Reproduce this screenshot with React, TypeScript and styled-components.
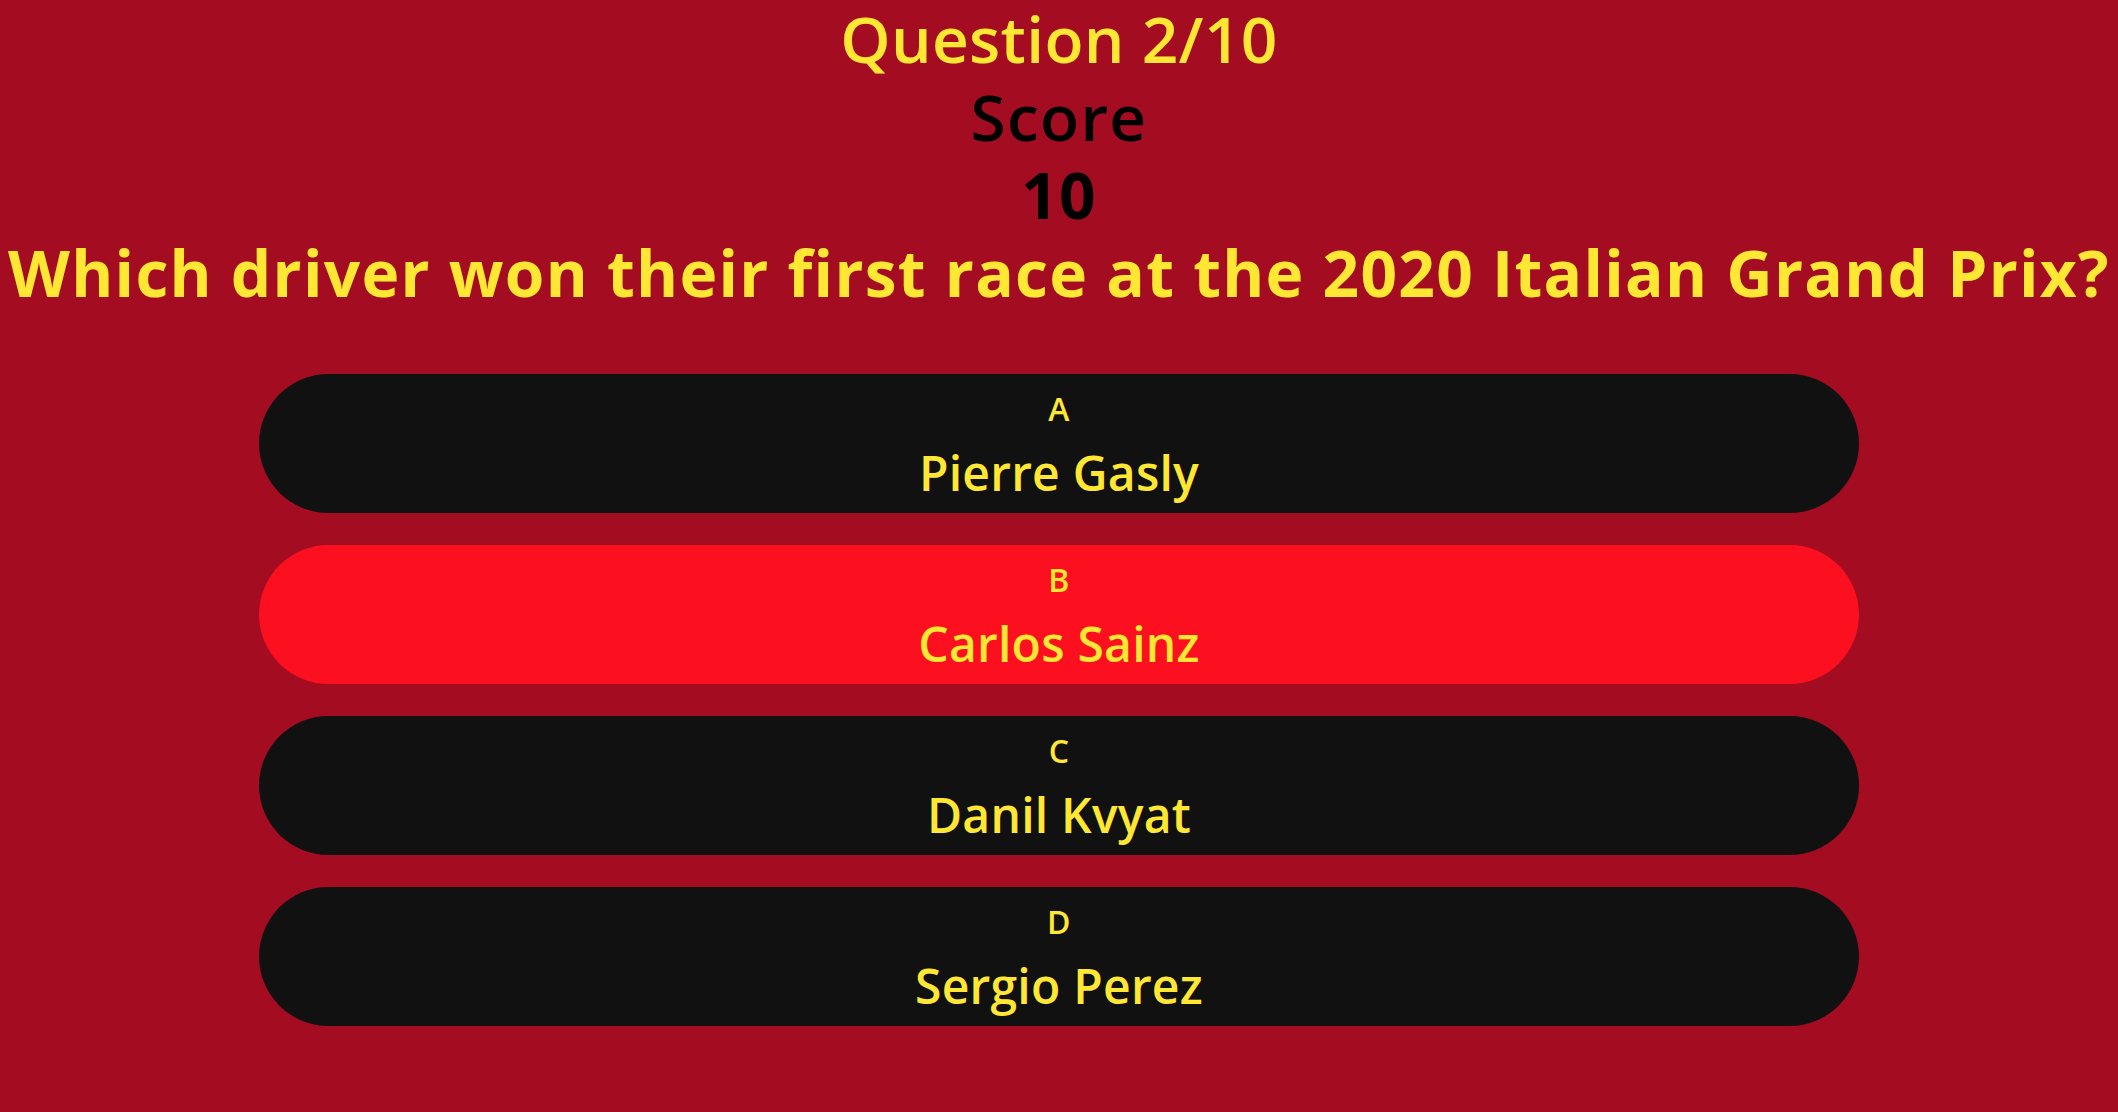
import React from "react";
import styled, { createGlobalStyle } from "styled-components";

const Global = createGlobalStyle`
  html, body {
    margin: 0;
    padding: 0;
    background: #a30c21;
  }
  body {
    font-family: "Open Sans", "Noto Sans", sans-serif;
  }
`;

const Page = styled.main`
  min-height: 100vh;
  background: #a30c21;
  display: flex;
  flex-direction: column;
  align-items: center;
`;

const Header = styled.header`
  display: flex;
  flex-direction: column;
  align-items: center;
  width: 100%;
`;

const HeadLine = styled.h1<{ $color: string; $weight: number; $spacing: string }>`
  margin: 0;
  font-size: 64px;
  line-height: 78px;
  letter-spacing: ${(p) => p.$spacing};
  font-weight: ${(p) => p.$weight};
  color: ${(p) => p.$color};
  text-align: center;
  white-space: nowrap;
`;

const Answers = styled.ul`
  list-style: none;
  margin: 62px 0 0;
  padding: 0;
  width: 1600px;
  display: flex;
  flex-direction: column;
  gap: 32px;
`;

const AnswerButton = styled.button<{ $selected?: boolean }>`
  width: 100%;
  height: 139px;
  box-sizing: border-box;
  padding: 15px 0 10px;
  border: none;
  border-radius: 70px;
  background: ${(p) => (p.$selected ? "#fc101f" : "#111111")};
  color: #ffe733;
  font-family: "Open Sans", "Noto Sans", sans-serif;
  display: flex;
  flex-direction: column;
  align-items: center;
  gap: 16px;
  cursor: pointer;
`;

const Letter = styled.span`
  font-size: 32px;
  line-height: 39px;
  font-weight: 600;
  letter-spacing: 0.01em;
`;

const Name = styled.span`
  font-size: 48px;
  line-height: 58px;
  font-weight: 600;
  letter-spacing: 0.005em;
`;

const answers = [
  { letter: "A", name: "Pierre Gasly" },
  { letter: "B", name: "Carlos Sainz", selected: true },
  { letter: "C", name: "Danil Kvyat" },
  { letter: "D", name: "Sergio Perez" },
];

export default function App() {
  return (
    <>
      <Global />
      <Page>
        <Header>
          <HeadLine $color="#ffe733" $weight={600} $spacing="0.005em">Question 2/10</HeadLine>
          <HeadLine $color="#000000" $weight={600} $spacing="0.02em">Score</HeadLine>
          <HeadLine $color="#000000" $weight={700} $spacing="0.02em">10</HeadLine>
          <HeadLine $color="#ffe733" $weight={700} $spacing="0.02em">
            Which driver won their first race at the 2020 Italian Grand Prix?
          </HeadLine>
        </Header>
        <Answers>
          {answers.map((a) => (
            <li key={a.letter}>
              <AnswerButton $selected={a.selected}>
                <Letter>{a.letter}</Letter>
                <Name>{a.name}</Name>
              </AnswerButton>
            </li>
          ))}
        </Answers>
      </Page>
    </>
  );
}
